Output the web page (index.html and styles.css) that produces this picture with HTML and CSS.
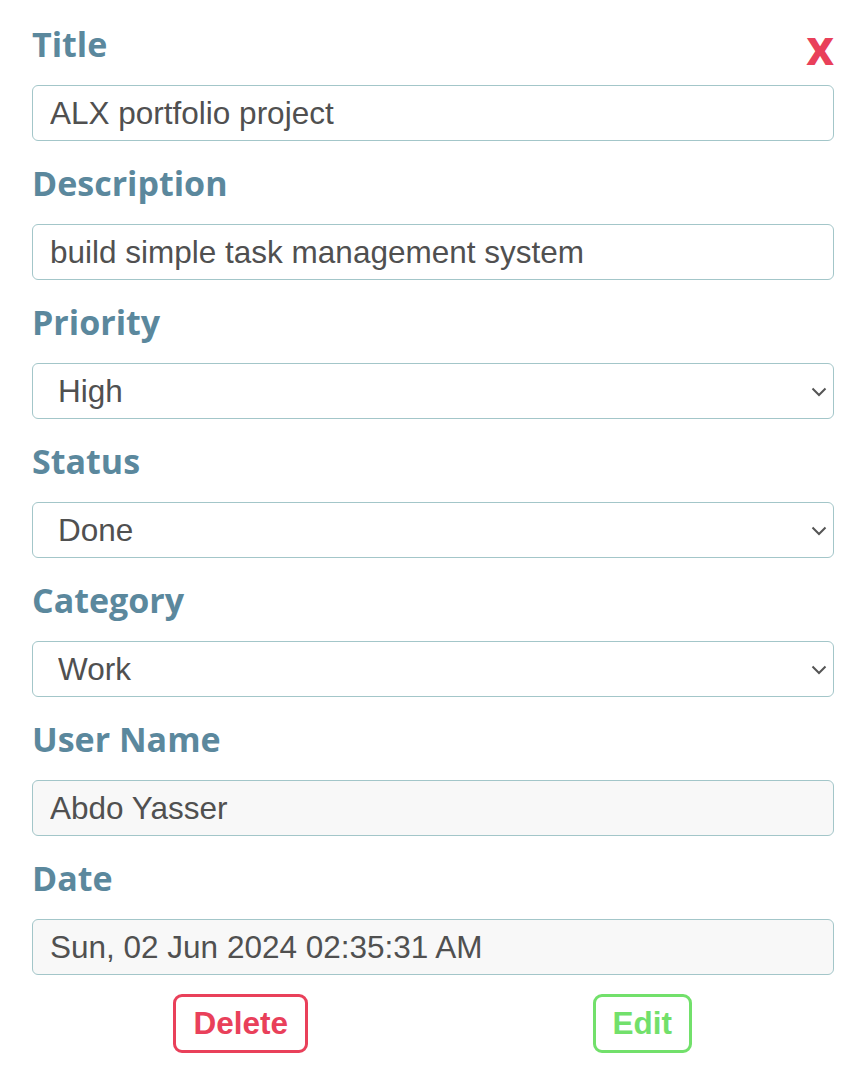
FILE: index.html
```html
<!DOCTYPE html>
<html>
<head>
<meta charset="utf-8">
<link rel="stylesheet" href="styles.css">
</head>
<body>
<form class="task-form">
  <button type="button" class="close-btn">x</button>
  <div class="field">
    <label class="label">Title</label>
    <input class="control" type="text" value="ALX portfolio project">
  </div>
  <div class="field">
    <label class="label">Description</label>
    <input class="control" type="text" value="build simple task management system">
  </div>
  <div class="field">
    <label class="label">Priority</label>
    <div class="select-wrap">
      <select class="control select"><option>High</option></select>
      <svg class="chevron" width="16" height="10" viewBox="0 0 16 10"><path d="M1.5 1.5 L8 8 L14.5 1.5" fill="none" stroke="#555" stroke-width="2"/></svg>
    </div>
  </div>
  <div class="field">
    <label class="label">Status</label>
    <div class="select-wrap">
      <select class="control select"><option>Done</option></select>
      <svg class="chevron" width="16" height="10" viewBox="0 0 16 10"><path d="M1.5 1.5 L8 8 L14.5 1.5" fill="none" stroke="#555" stroke-width="2"/></svg>
    </div>
  </div>
  <div class="field">
    <label class="label">Category</label>
    <div class="select-wrap">
      <select class="control select"><option>Work</option></select>
      <svg class="chevron" width="16" height="10" viewBox="0 0 16 10"><path d="M1.5 1.5 L8 8 L14.5 1.5" fill="none" stroke="#555" stroke-width="2"/></svg>
    </div>
  </div>
  <div class="field">
    <label class="label">User Name</label>
    <input class="control readonly" type="text" value="Abdo Yasser" readonly>
  </div>
  <div class="field">
    <label class="label">Date</label>
    <input class="control readonly" type="text" value="Sun, 02 Jun 2024 02:35:31 AM" readonly>
  </div>
  <div class="actions">
    <div class="action-cell"><button type="button" class="btn btn-delete">Delete</button></div>
    <div class="action-cell"><button type="button" class="btn btn-edit">Edit</button></div>
  </div>
</form>
</body>
</html>
```
FILE: styles.css
```css
html, body {
  margin: 0;
  padding: 0;
  background: #ffffff;
}

.task-form {
  position: relative;
  width: 802px;
  margin: 0 0 0 32px;
  padding-top: 22px;
  display: flex;
  flex-direction: column;
}

.close-btn {
  position: absolute;
  top: 19px;
  right: 0;
  padding: 0;
  border: 0;
  background: none;
  font-family: "Open Sans", sans-serif;
  font-weight: 700;
  font-size: 48px;
  line-height: 56px;
  color: #e9405a;
  cursor: pointer;
}

.field {
  display: flex;
  flex-direction: column;
  margin-bottom: 20px;
}

.label {
  font-family: "Open Sans", sans-serif;
  font-weight: 700;
  font-size: 34px;
  line-height: 45px;
  color: #5b889d;
  margin-bottom: 18px;
}

.control {
  box-sizing: border-box;
  width: 100%;
  height: 56px;
  border: 1px solid #a3c6c9;
  border-radius: 6px;
  background: #ffffff;
  font-family: "Liberation Sans", Arial, sans-serif;
  font-size: 31.5px;
  color: #505050;
  padding: 0 17px;
  margin: 0;
  outline: none;
}

.select-wrap {
  position: relative;
}

.select {
  appearance: none;
  -webkit-appearance: none;
  padding-left: 25px;
  padding-right: 40px;
}

.chevron {
  position: absolute;
  right: 7px;
  top: 24px;
  pointer-events: none;
}

.readonly {
  background: #f8f8f8;
}

.actions {
  display: flex;
  width: 803px;
  margin-left: 8px;
  margin-top: -1px;
}

.action-cell {
  flex: 1;
  display: flex;
  justify-content: center;
}

.btn {
  box-sizing: border-box;
  height: 59px;
  padding: 0 17px;
  border-radius: 9px;
  background: #ffffff;
  font-family: "Liberation Sans", Arial, sans-serif;
  font-weight: 700;
  font-size: 31.5px;
  cursor: pointer;
}

.btn-delete {
  border: 3px solid #e9405a;
  color: #e9405a;
}

.btn-edit {
  border: 3px solid #72e06b;
  color: #72e06b;
}
```
